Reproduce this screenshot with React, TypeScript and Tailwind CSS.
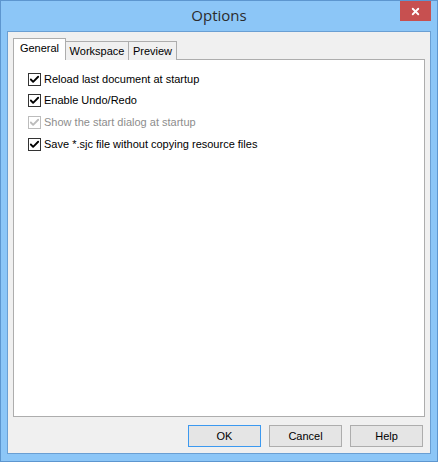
import { Check, X } from 'lucide-react';

const options = [
  { label: 'Reload last document at startup', checked: true, disabled: false },
  { label: 'Enable Undo/Redo', checked: true, disabled: false },
  { label: 'Show the start dialog at startup', checked: true, disabled: true },
  { label: 'Save *.sjc file without copying resource files', checked: true, disabled: false },
];

function CheckBox({ disabled }: { disabled: boolean }) {
  return (
    <div
      className={`w-[13px] h-[13px] border flex items-center justify-center bg-white shrink-0 ${
        disabled ? 'border-[#bcbcbc]' : 'border-[#333333]'
      }`}
    >
      <Check className={`w-[11px] h-[11px] ${disabled ? 'text-[#bcbcbc]' : 'text-black'}`} strokeWidth={4} />
    </div>
  );
}

export default function App() {
  return (
    <div className="w-[438px] h-[462px] bg-[#8cc6f7] border border-[#5d96cf] flex flex-col" style={{ fontFamily: '"Liberation Sans", Arial, sans-serif' }}>
      {/* title bar */}
      <div className="relative h-[30px] shrink-0 flex items-center justify-center">
        <span className="text-[15px] text-[#2b2b2b] pb-[2px]" style={{ fontFamily: '"Open Sans", "Noto Sans", sans-serif' }}>Options</span>
        <div className="absolute right-[6px] top-0 w-[31px] h-[20px] bg-[#c75050] flex items-center justify-center">
          <X className="w-[11px] h-[11px] text-white" strokeWidth={4} />
        </div>
      </div>

      {/* client */}
      <div className="flex-1 mx-[6px] mb-[7px] border border-[#6a9fd3] bg-[#f0f0f0] flex flex-col px-[5px] pt-[6px]">
        {/* tabs */}
        <div className="flex items-end h-[22px] relative z-10">
          <div className="h-[22px] w-[53px] bg-white border border-[#adadad] border-b-0 text-[11px] text-black flex items-center justify-center pb-[2px]">General</div>
          <div className="h-[19px] w-[63px] bg-[#f0f0f0] border border-[#adadad] border-l-0 border-b-0 text-[11px] text-black flex items-center justify-center">Workspace</div>
          <div className="h-[19px] w-[48px] bg-[#f0f0f0] border border-[#adadad] border-l-0 border-b-0 text-[11px] text-black flex items-center justify-center">Preview</div>
        </div>
        <div className="h-[358px] bg-white border border-[#adadad] -mt-[1px] pt-[12px] pl-[14px] flex flex-col gap-[7.7px]">
          {options.map((o, i) => (
            <div key={i} className="flex items-center gap-[3px] h-[14px]">
              <CheckBox disabled={o.disabled} />
              <span className={`text-[11px] ${o.disabled ? 'text-[#8d8d8d]' : 'text-black'}`}>{o.label}</span>
            </div>
          ))}
        </div>

        {/* buttons */}
        <div className="flex justify-end gap-[8px] mt-[8px] pr-[2px]">
          <button className="w-[73px] h-[22px] bg-[#e5e5e5] border border-[#3c99f0] text-[11px] text-black">OK</button>
          <button className="w-[73px] h-[22px] bg-[#e5e5e5] border border-[#adadad] text-[11px] text-black">Cancel</button>
          <button className="w-[73px] h-[22px] bg-[#e5e5e5] border border-[#adadad] text-[11px] text-black">Help</button>
        </div>
      </div>
    </div>
  );
}
